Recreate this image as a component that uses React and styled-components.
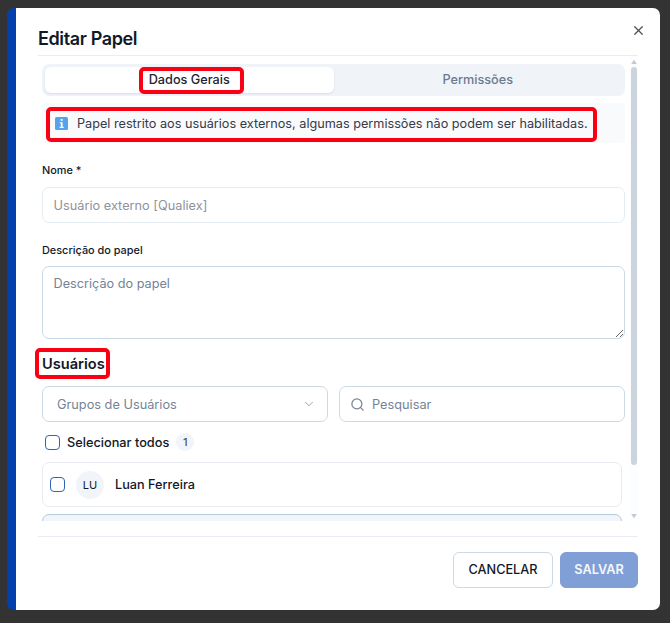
import React, { useState } from "react";
import styled, { createGlobalStyle } from "styled-components";
import { ChevronDown, Search, X } from "lucide-react";

const users = [{ initials: "LU", name: "Luan Ferreira" }];

const App = () => {
  const [tab, setTab] = useState("dados");
  const [description, setDescription] = useState("");
  const [search, setSearch] = useState("");

  return (
    <Overlay>
      <GlobalStyle />
      <Dialog>
        <Header>
          <Title>Editar Papel</Title>
          <CloseButton aria-label="Fechar">
            <X size={15} strokeWidth={1.9} />
          </CloseButton>
        </Header>

        <Body>
          <Content>
            <Tabs>
              <Tab $active={tab === "dados"} onClick={() => setTab("dados")}>
                <Marked $inset="-4px -14px -5px -10px">Dados Gerais</Marked>
              </Tab>
              <Tab $active={tab === "permissoes"} onClick={() => setTab("permissoes")}>
                Permissões
              </Tab>
            </Tabs>

            <Notice>
              <Marked $inset="-6px -9px -9px -9px">
                <NoticeInner>
                  <InfoBadge />
                  <NoticeText>
                    Papel restrito aos usuários externos, algumas permissões não podem ser habilitadas.
                  </NoticeText>
                </NoticeInner>
              </Marked>
            </Notice>

            <Label htmlFor="nome">Nome *</Label>
            <Input id="nome" placeholder="Usuário externo [Qualiex]" disabled />

            <Label htmlFor="descricao" $gap={8}>Descrição do papel</Label>
            <TextArea
              id="descricao"
              placeholder="Descrição do papel"
              value={description}
              onChange={(e) => setDescription(e.target.value)}
            />

            <SectionTitle>
              <Marked $inset="-6px -5px -5px -7px">Usuários</Marked>
            </SectionTitle>

            <Filters>
              <Select>
                Grupos de Usuários
                <ChevronDown size={14} strokeWidth={1.7} />
              </Select>
              <SearchBox>
                <Search size={15} strokeWidth={2} />
                <SearchInput
                  placeholder="Pesquisar"
                  value={search}
                  onChange={(e) => setSearch(e.target.value)}
                />
              </SearchBox>
            </Filters>

            <SelectAll>
              <Checkbox type="checkbox" />
              Selecionar todos
              <Count>1</Count>
            </SelectAll>

            <UserList>
              {users.map((user) => (
                <UserRow key={user.name}>
                  <Checkbox type="checkbox" />
                  <Avatar>{user.initials}</Avatar>
                  {user.name}
                </UserRow>
              ))}
              <UserRow $highlighted />
            </UserList>
          </Content>

          <ScrollTrack>
            <ScrollArrow viewBox="0 0 8 8">
              <path d="M4 1.8 6.8 6H1.2Z" />
            </ScrollArrow>
            <ScrollThumb />
            <ScrollArrow viewBox="0 0 8 8">
              <path d="M4 6.2 6.8 2H1.2Z" />
            </ScrollArrow>
          </ScrollTrack>
        </Body>

        <Footer>
          <Button $width={100}>CANCELAR</Button>
          <Button $width={78} $primary>SALVAR</Button>
        </Footer>
      </Dialog>
    </Overlay>
  );
};

const GlobalStyle = createGlobalStyle`
  * {
    box-sizing: border-box;
  }

  body {
    margin: 0;
    background: #333333;
    font-family: Inter, "Liberation Sans", sans-serif;
    color: #111827;
  }

  button, input, textarea {
    font-family: inherit;
  }
`;

const Overlay = styled.div`
  height: 623px;
  padding: 8px 10px 13px 7px;
  background: #333333;
  overflow: hidden;
`;

const Dialog = styled.div`
  display: flex;
  flex-direction: column;
  height: 602px;
  padding: 0 22px 0 31px;
  background: linear-gradient(to right, #053fac 9px, #ffffff 9px);
  border-radius: 7px;
`;

const Header = styled.div`
  display: flex;
  justify-content: space-between;
  height: 48px;
  border-bottom: 1px solid #e8edf3;
`;

const Title = styled.h2`
  margin: 19px 0 0;
  font-size: 18px;
  font-weight: 600;
  line-height: 24px;
  letter-spacing: -0.38px;
`;

const CloseButton = styled.button`
  display: flex;
  width: 15px;
  height: 15px;
  margin: 15px -8px 0 0;
  padding: 0;
  border: none;
  background: none;
  color: #4b4f58;
  cursor: pointer;
`;

const Body = styled.div`
  display: flex;
  justify-content: space-between;
  height: 465px;
  margin-left: -8px;
  padding-left: 8px;
  overflow: hidden;
`;

const Content = styled.div`
  width: 587px;
  padding: 8px 0 0 4px;
`;

const Marked = styled.span`
  position: relative;
  display: inline-block;

  &::after {
    content: "";
    position: absolute;
    inset: ${({ $inset }) => $inset};
    border: 4px solid #fb0012;
    border-radius: 5px;
    pointer-events: none;
  }
`;

const Tabs = styled.div`
  display: grid;
  grid-template-columns: 1fr 1fr;
  height: 32px;
  padding: 3px;
  border-radius: 7px;
  background: #f0f4f9;
`;

const Tab = styled.button`
  display: flex;
  align-items: center;
  justify-content: center;
  padding: 0 0 1px;
  border: none;
  border-radius: 6px;
  background: ${({ $active }) => ($active ? "#ffffff" : "transparent")};
  box-shadow: ${({ $active }) => ($active ? "0 1px 2px rgba(15, 23, 42, 0.1)" : "none")};
  color: ${({ $active }) => ($active ? "#1f2430" : "#6b7a90")};
  font-size: 12.7px;
  font-weight: 500;
  line-height: 18px;
  cursor: pointer;
`;

const Notice = styled.div`
  display: flex;
  align-items: center;
  height: 40px;
  margin-top: 7px;
  padding-left: 13px;
  border-radius: 4px;
  background: #f9fafc;
`;

const NoticeInner = styled.div`
  display: flex;
  align-items: center;
  height: 20px;
`;

/* keycap style information glyph */
const InfoBadge = () => (
  <InfoSvg viewBox="0 0 13 13">
    <rect width="13" height="13" rx="1.5" fill="#55a3ec" />
    <rect x="5.7" y="2" width="1.9" height="1.8" fill="#fff" />
    <path d="M4.8 5.2h2.8v4.6h1.1v1.1H4.6V9.8h1.2V6.3h-1Z" fill="#fff" />
  </InfoSvg>
);

const InfoSvg = styled.svg`
  width: 13px;
  height: 13px;
`;

const NoticeText = styled.span`
  margin-left: 9px;
  color: #353b48;
  font-size: 12.68px;
  white-space: nowrap;
`;

const Label = styled.label`
  display: block;
  height: 16px;
  margin: 19px 0 ${({ $gap = 9 }) => $gap}px;
  font-size: 10.9px;
  font-weight: 500;
  line-height: 16px;
`;

const Input = styled.input`
  display: block;
  width: 100%;
  height: 36px;
  padding: 0 10.5px;
  border: 1px solid #e5ecf1;
  border-radius: 7px;
  background: #ffffff;
  font-size: 12.75px;

  &::placeholder {
    color: #8f9399;
    opacity: 1;
  }
`;

const TextArea = styled.textarea`
  display: block;
  width: 100%;
  height: 73px;
  padding: 8px 10.5px;
  border: 1px solid #cbd9e2;
  border-radius: 7px;
  outline: none;
  font-size: 12.7px;
  line-height: 18px;
  resize: vertical;

  &::placeholder {
    color: #758397;
  }
`;

const SectionTitle = styled.h3`
  margin: 15px 0 12px;
  height: 20px;
  font-size: 14.6px;
  font-weight: 600;
  line-height: 20px;
`;

const Filters = styled.div`
  display: grid;
  grid-template-columns: 1fr 1fr;
  gap: 11px;
`;

const Field = styled.div`
  display: flex;
  align-items: center;
  height: 36px;
  border: 1px solid #cbd9e2;
  border-radius: 7px;
  color: #758397;
  font-size: 12.75px;
`;

const Select = styled(Field)`
  justify-content: space-between;
  padding: 0 11px 0 14px;

  svg {
    color: #98a5b3;
  }
`;

const SearchBox = styled(Field)`
  gap: 7px;
  padding: 0 10px;
`;

const SearchInput = styled.input`
  flex: 1;
  padding: 0;
  border: none;
  outline: none;
  font-size: 12.75px;

  &::placeholder {
    color: #758397;
  }
`;

const Checkbox = styled.input`
  flex: none;
  appearance: none;
  width: 15px;
  height: 15px;
  margin: 0;
  border: 1px solid #2f65b4;
  border-radius: 4px;
  background: #ffffff;
`;

const SelectAll = styled.label`
  display: flex;
  align-items: center;
  height: 20px;
  margin-top: 10px;
  padding-left: 3px;
  gap: 7px;
  font-size: 12.75px;
  font-weight: 500;
`;

const Count = styled.span`
  width: 18px;
  border-radius: 9px;
  background: #f1f5f9;
  color: #4b5566;
  font-size: 11px;
  line-height: 18px;
  text-align: center;
`;

const UserList = styled.div`
  display: flex;
  flex-direction: column;
  gap: 7px;
  width: 580px;
  margin-top: 10px;
`;

const UserRow = styled.div`
  display: flex;
  align-items: center;
  height: 45px;
  padding-left: 7px;
  gap: 11px;
  border: 1px solid ${({ $highlighted }) => ($highlighted ? "#b4cbdd" : "#e7ebf1")};
  border-radius: 7px;
  background: ${({ $highlighted }) => ($highlighted ? "#f1f5fa" : "#ffffff")};
  font-size: 12.7px;
  font-weight: 500;
`;

const Avatar = styled.div`
  display: flex;
  align-items: center;
  justify-content: center;
  width: 28px;
  height: 28px;
  border-radius: 50%;
  background: #f1f5f9;
  font-size: 11px;
  font-weight: 400;
`;

const ScrollTrack = styled.div`
  display: flex;
  flex-direction: column;
  width: 8px;
  padding: 2px 0 0;
  background: #fcfdfe;
`;

const ScrollArrow = styled.svg`
  width: 8px;
  height: 8px;
  fill: #c3c9d2;
`;

const ScrollThumb = styled.div`
  height: 398px;
  margin: 1px 1px 47px;
  border-radius: 3px;
  background: #cbd3dd;
`;

const Footer = styled.div`
  display: flex;
  justify-content: flex-end;
  gap: 7px;
  margin-top: 15px;
  padding-top: 15px;
  border-top: 1px solid #e8edf3;
`;

const Button = styled.button`
  width: ${({ $width }) => $width}px;
  height: 36px;
  padding: 0 0 1px;
  border: 1px solid ${({ $primary }) => ($primary ? "#809fd6" : "#cbd9e2")};
  border-radius: 6px;
  background: ${({ $primary }) => ($primary ? "#809fd6" : "#ffffff")};
  color: ${({ $primary }) => ($primary ? "#f4f7fc" : "#111827")};
  font-size: 12.7px;
  font-weight: ${({ $primary }) => ($primary ? 600 : 500)};
  cursor: pointer;
`;

export default App;
